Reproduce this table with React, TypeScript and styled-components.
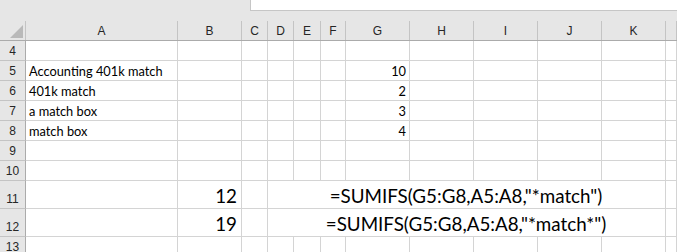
import React from "react";
import styled, { createGlobalStyle } from "styled-components";

const GlobalStyle = createGlobalStyle`
  html, body { margin: 0; padding: 0; background: #ffffff; overflow: hidden; }
  body { font-family: "Lato", "Liberation Sans", sans-serif; }
`;

const HEADER_BG = "#e6e6e6";
const GRID = "#d4d4d4";
const HEADER_EDGE = "#ababab";
const HEADER_SEP = "#c4c4c4";

// column widths include each column's right gridline
const columns = [
  { name: "A", width: 152 },
  { name: "B", width: 64 },
  { name: "C", width: 26 },
  { name: "D", width: 26 },
  { name: "E", width: 27 },
  { name: "F", width: 25 },
  { name: "G", width: 64 },
  { name: "H", width: 64 },
  { name: "I", width: 64 },
  { name: "J", width: 64 },
  { name: "K", width: 64 },
];

const template = `26px ${columns.map((c) => `${c.width}px`).join(" ")} 1fr`;

const Sheet = styled.div`
  width: 677px;
  height: 252px;
  overflow: hidden;
  background: #ffffff;
  color: #000000;
`;

const FormulaStrip = styled.div`
  display: flex;
  height: 11px;
  background: ${HEADER_BG};
`;

const FormulaBox = styled.div`
  margin-left: 250px;
  flex: 1;
  background: #ffffff;
  border-left: 1px solid #c6c6c6;
  border-bottom: 1px solid #c6c6c6;
`;

const HeaderBand = styled.div`
  background: ${HEADER_BG};
  padding-top: 10px;
  border-bottom: 1px solid ${HEADER_EDGE};
`;

const Row = styled.div<{ $h: number }>`
  display: grid;
  grid-template-columns: ${template};
  height: ${(p) => p.$h}px;
`;

const ColumnLabel = styled.div`
  border-right: 1px solid ${HEADER_SEP};
  display: flex;
  align-items: center;
  justify-content: center;
  font-family: "Liberation Sans", sans-serif;
  font-size: 12px;
  color: #262626;
  padding-top: 1px;
`;

const Corner = styled.div`
  position: relative;
  border-right: 1px solid ${HEADER_SEP};
  &::after {
    content: "";
    position: absolute;
    right: 2px;
    bottom: 2px;
    width: 0;
    height: 0;
    border-left: 13px solid transparent;
    border-bottom: 13px solid #b9b9b9;
  }
`;

const RowNumber = styled.div`
  background: ${HEADER_BG};
  border-right: 1px solid ${HEADER_EDGE};
  border-bottom: 1px solid ${HEADER_SEP};
  display: flex;
  align-items: flex-end;
  justify-content: center;
  font-family: "Liberation Sans", sans-serif;
  font-size: 12px;
  line-height: 14px;
  padding-bottom: 2px;
  color: #262626;
`;

const Cell = styled.div<{ $align?: "left" | "right" | "center"; $big?: boolean; $span?: number }>`
  border-right: 1px solid ${GRID};
  border-bottom: 1px solid ${GRID};
  display: flex;
  align-items: flex-end;
  justify-content: ${(p) =>
    p.$align === "right" ? "flex-end" : p.$align === "center" ? "center" : "flex-start"};
  grid-column: ${(p) => (p.$span ? `span ${p.$span}` : "auto")};
  padding: ${(p) => (p.$big ? "0 4px 2px 3px" : "0 3px 1px 3px")};
  font-size: ${(p) => (p.$big ? "18.8px" : "12.8px")};
  line-height: ${(p) => (p.$big ? "20px" : "16px")};
  white-space: nowrap;
  overflow: visible;
  min-width: 0;
`;

type CellData = { text?: string; align?: "left" | "right" | "center"; big?: boolean; span?: number };

type RowData = { n: number; h: number; cells: Record<string, CellData> };

const rows: RowData[] = [
  { n: 4, h: 20, cells: {} },
  { n: 5, h: 20, cells: { A: { text: "Accounting 401k match" }, G: { text: "10", align: "right" } } },
  { n: 6, h: 20, cells: { A: { text: "401k match" }, G: { text: "2", align: "right" } } },
  { n: 7, h: 20, cells: { A: { text: "a match box" }, G: { text: "3", align: "right" } } },
  { n: 8, h: 20, cells: { A: { text: "match box" }, G: { text: "4", align: "right" } } },
  { n: 9, h: 20, cells: {} },
  { n: 10, h: 20, cells: {} },
  {
    n: 11,
    h: 28,
    cells: {
      B: { text: "12", align: "right", big: true },
      D: { text: '=SUMIFS(G5:G8,A5:A8,"*match")', align: "center", big: true, span: 8 },
    },
  },
  {
    n: 12,
    h: 28,
    cells: {
      B: { text: "19", align: "right", big: true },
      D: { text: '=SUMIFS(G5:G8,A5:A8,"*match*")', align: "center", big: true, span: 8 },
    },
  },
  { n: 13, h: 20, cells: {} },
];

function SheetRow({ row }: { row: RowData }) {
  const out: React.ReactNode[] = [];
  let skip = 0;
  columns.forEach((col) => {
    if (skip > 0) {
      skip -= 1;
      return;
    }
    const c = row.cells[col.name];
    if (c?.span) skip = c.span - 1;
    out.push(
      <Cell key={col.name} $align={c?.align} $big={c?.big} $span={c?.span}>
        {c?.text}
      </Cell>
    );
  });
  return (
    <Row $h={row.h}>
      <RowNumber>{row.n}</RowNumber>
      {out}
      <Cell />
    </Row>
  );
}

export default function App() {
  return (
    <Sheet>
      <GlobalStyle />
      <FormulaStrip>
        <FormulaBox />
      </FormulaStrip>
      <HeaderBand>
        <Row $h={19}>
          <Corner />
          {columns.map((c) => (
            <ColumnLabel key={c.name}>{c.name}</ColumnLabel>
          ))}
          <ColumnLabel />
        </Row>
      </HeaderBand>
      {rows.map((r) => (
        <SheetRow key={r.n} row={r} />
      ))}
    </Sheet>
  );
}
